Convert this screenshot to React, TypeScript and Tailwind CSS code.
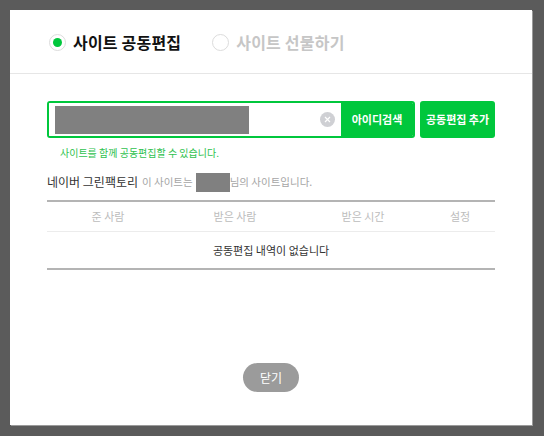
import React from "react";

const font = { fontFamily: '"Noto Sans CJK KR", "Noto Sans", sans-serif' };

function Radio({ checked, label }: { checked: boolean; label: string }) {
  return (
    <label className="flex items-center gap-[7px]">
      <span className="flex h-[17px] w-[17px] items-center justify-center rounded-full border border-[#dcdcdc] bg-white">
        {checked && <span className="h-[9px] w-[9px] rounded-full bg-[#00c73c]" />}
      </span>
      <span
        className={`text-[16px] font-bold tracking-[0.2px] ${
          checked ? "text-[#111]" : "text-[#c6c6c6]"
        }`}
      >
        {label}
      </span>
    </label>
  );
}

export default function App() {
  return (
    <div className="h-[436px] w-[544px] bg-[#5b5b5b] pl-[10px] pt-[10px]" style={font}>
      <div className="flex h-[415px] w-[522px] flex-col bg-white shadow-[1px_1px_0_#9a9a9a]">
        <div className="flex h-[64px] items-center gap-[31px] border-b border-[#e6e6e6] pl-[39px] pt-[1px]">
          <Radio checked label="사이트 공동편집" />
          <Radio checked={false} label="사이트 선물하기" />
        </div>

        <div className="flex flex-1 flex-col px-[37px] pt-[27px]">
          <div className="flex h-[37px] gap-[5px]">
            <div className="flex flex-1 overflow-hidden rounded-[3px] border-2 border-[#00c73c]">
              <div className="flex flex-1 items-center bg-white pl-[6px] pr-[6px]">
                <div className="h-[28px] w-[194px] bg-[#808080]" />
                <span className="ml-auto flex h-[15px] w-[15px] items-center justify-center rounded-full bg-[#cfd0d4]">
                  <svg width="7" height="7" viewBox="0 0 7 7">
                    <path d="M1 1L6 6M6 1L1 6" stroke="#fff" strokeWidth="1.2" />
                  </svg>
                </span>
              </div>
              <button className="w-[72px] bg-[#00c73c] text-[11px] font-bold text-white">
                아이디검색
              </button>
            </div>
            <button className="w-[75px] rounded-[3px] bg-[#00c73c] text-[11px] font-bold text-white">
              공동편집 추가
            </button>
          </div>

          <p className="mt-[7px] pl-[13px] text-[10px] leading-[15px] text-[#2fc24f]">
            사이트를 함께 공동편집할 수 있습니다.
          </p>

          <div className="mt-[12px] flex h-[20px] items-center">
            <span className="text-[12px] text-[#333]">네이버 그린팩토리</span>
            <span className="ml-[4px] text-[10.5px] text-[#a5a5a5]">이 사이트는</span>
            <span className="ml-[3px] h-[19px] w-[34px] bg-[#808080]" />
            <span className="text-[10.5px] text-[#a5a5a5]">님의 사이트입니다.</span>
          </div>

          <div className="mt-[8px] border-y-2 border-[#b4b4b4]">
            <div className="flex h-[30px] items-center border-b border-[#ececec] text-[11px] text-[#bcbcbc]">
              <span className="w-[122px] text-center">준 사람</span>
              <span className="w-[132px] text-center">받은 사람</span>
              <span className="w-[124px] text-center">받은 시간</span>
              <span className="w-[70px] text-center">설정</span>
            </div>
            <div className="flex h-[36px] items-center justify-center text-[11px] text-[#333]">
              공동편집 내역이 없습니다
            </div>
          </div>

          <div className="mt-[93px] flex justify-center">
            <button className="h-[29px] w-[56px] rounded-full bg-[#9b9b9b] text-[12px] text-white">
              닫기
            </button>
          </div>
        </div>
      </div>
    </div>
  );
}
